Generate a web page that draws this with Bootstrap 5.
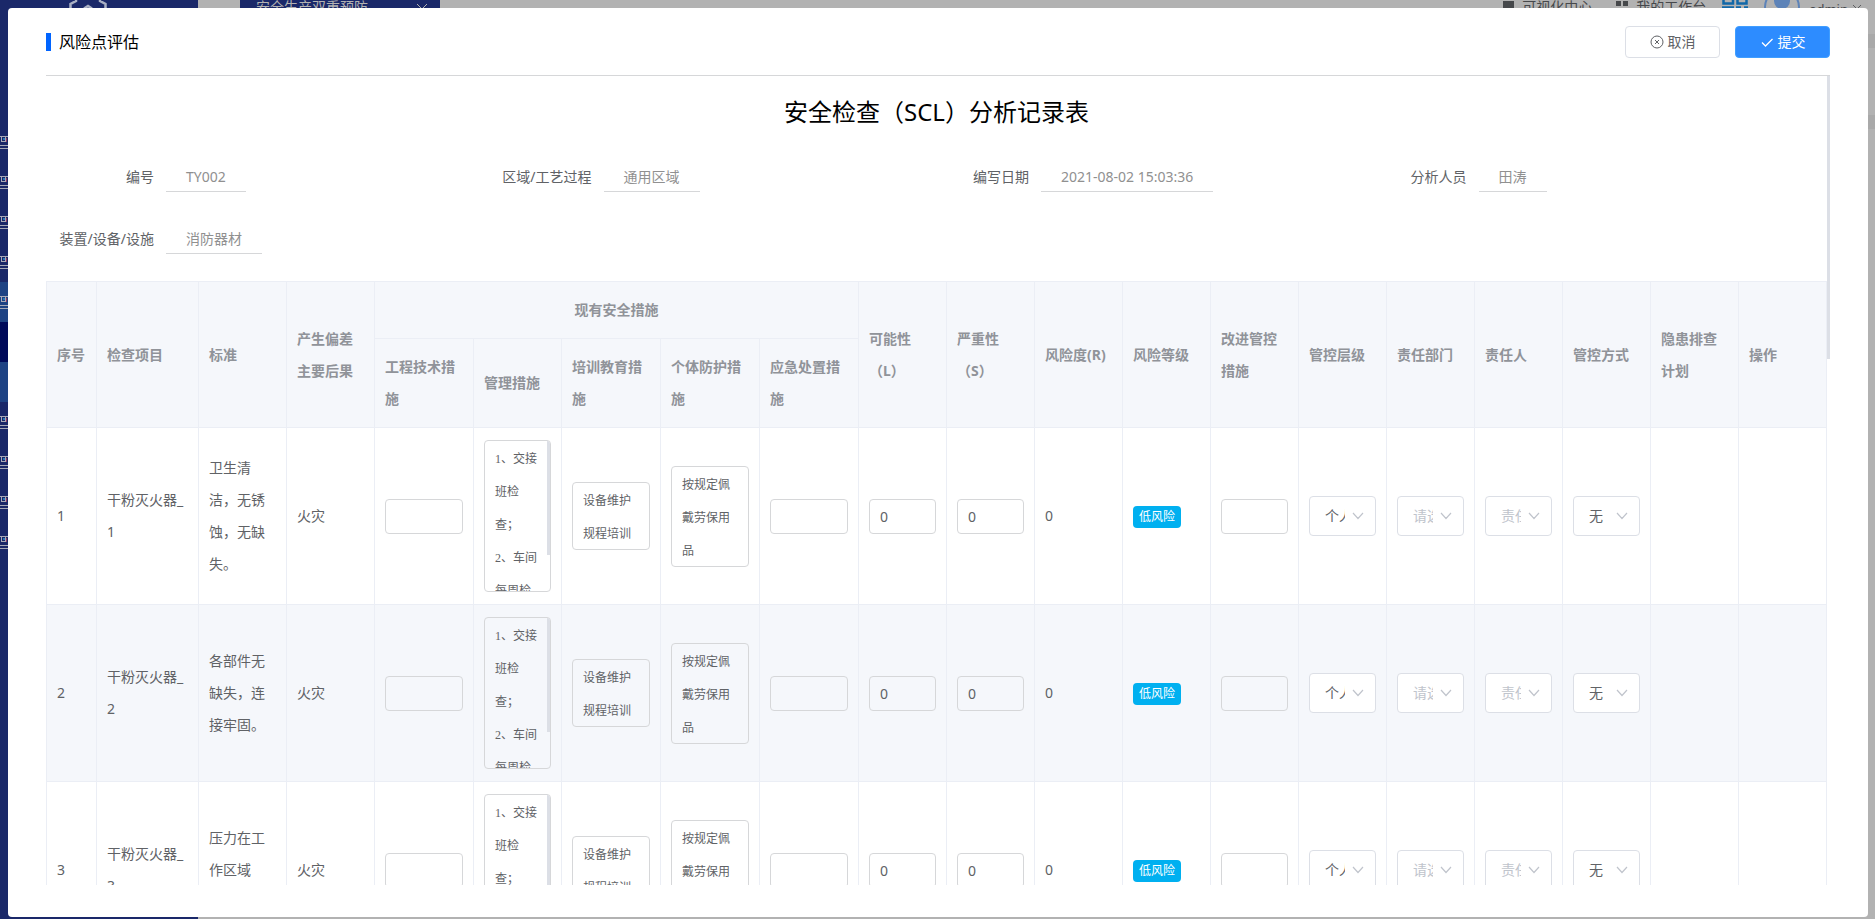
<!DOCTYPE html>
<html lang="zh-CN">
<head>
<meta charset="utf-8">
<meta name="viewport" content="width=device-width, initial-scale=1">
<title>风险点评估</title>
<link href="https://cdn.jsdelivr.net/npm/bootstrap@5.3.0/dist/css/bootstrap.min.css" rel="stylesheet">
<style>
  body { font-family: "Noto Sans", "Noto Sans CJK SC", sans-serif; font-size: 14px; color: #606266; background: #b2b2b2; }

  /* dimmed application behind the dialog */
  .app-side { width: 198px; background: #1a2869; padding-top: 122px; }
  .app-logo { top: 0; left: 69px; }
  .side-item { height: 40px; padding-top: 14px; line-height: 0; }
  .side-open { background: #1e4384; }
  .side-active { background: #000a5a; }
  .app-top { height: 14px; line-height: 14px; color: #46484b; padding-right: 13px; white-space: nowrap; }
  .app-tab { width: 200px; margin-left: 42px; padding: 0 12px 0 16px; background: #1a2869; color: #b2b2b2; }
  .user-name { padding-top: 2px; font-size: 13px; }
  .app-strip { height: 14px; margin-top: 20px; margin-bottom: 67px; background: #a9a9a9; }

  /* dialog */
  .dialog { inset: 8px 7px 2px 8px; border-radius: 4px; padding: 0 38px 32px; }
  .dialog-head { height: 68px; border-bottom: 1px solid #d6d7d9; }
  .dialog-title { font-size: 16px; line-height: 24px; color: #000; }
  .title-bar { width: 5px; height: 18px; background: #0064ff; }
  .tool-row { gap: 15px; }
  .btn-tool { width: 95px; height: 32px; font-size: 14px; line-height: 20px; border-radius: 4px; padding: 0; }
  .btn-cancel { color: #606266; border-color: #dcdfe6; background: #fff; }
  .btn-submit { color: #fff; border-color: #409eff; background: #2d8cff; }
  .dialog-scroll { overflow-y: auto; scrollbar-width: none; padding-right: 3px; }
  .dialog-scroll::-webkit-scrollbar { display: none; }
  .thumb { width: 3px; background: #dcdfe6; right: 0; top: 0; height: 35%; }

  .doc-title { font-size: 24px; line-height: 32px; color: #000; padding-top: 20px; margin-bottom: 33px; font-weight: 400; }
  .info-grid { display: grid; grid-template-columns: repeat(4, 1fr); row-gap: 31px; padding-right: 31px; margin: 0 0 27px; }
  .info-grid dt { width: 108px; padding-top: 2px; text-align: right; font-weight: 400; line-height: 28px; white-space: nowrap; }
  .info-grid dd { margin: 0 0 0 12px; padding: 2px 20px 0; line-height: 28px; color: #909090; border-bottom: 1px solid #d6d7d9; white-space: nowrap; }

  /* record table */
  .record { width: 100%; table-layout: fixed; border-collapse: separate; border-spacing: 0; border: solid #ebeef5; border-width: 1px 0 0 1px; line-height: 32px; }
  .record th, .record td { padding: 12px 10px; border: solid #ebeef5; border-width: 0 1px 1px 0; vertical-align: middle; word-break: break-all; }
  .record th { background: #f5f7fb; color: #909399; font-weight: 700; }
  .record tbody tr:nth-child(even) { background: #f5f7fb; }
  .c-no { width: 50px; } .c-item { width: 102px; } .c-s { width: 88px; } .c-m { width: 99px; }

  .box { display: block; width: 100%; height: 35px; padding: 0 10px; border: 1px solid #d6d7d9; border-radius: 4px; background: transparent; color: #606266; font-size: 14px; line-height: 33px; }
  textarea.box { resize: none; overflow: hidden; padding-top: 2px; font-family: "Liberation Serif", "Noto Sans CJK SC", serif; font-size: 12px; }
  textarea.lines-2 { height: 68px; }
  textarea.lines-3 { height: 101px; }
  textarea.box-scroll { height: 152px; padding-right: 13px; }
  .box-thumb { width: 3px; height: 75%; top: 1px; right: 1px; background: #dcdfe6; border-radius: 0 3px 0 0; }
  .pick { display: block; width: 100%; height: 40px; padding: 0 30px 0 15px; border: 1px solid #dcdfe6; border-radius: 4px; color: #606266; font-size: 14px; line-height: 38px; appearance: none; text-overflow: clip; overflow: hidden;
    background: #fff url("data:image/svg+xml,%3Csvg xmlns='http://www.w3.org/2000/svg' width='12' height='8' fill='none' stroke='%23c0c4cc' stroke-width='1.2'%3E%3Cpath d='M1 1l5 5.500l5-5.500'/%3E%3C/svg%3E") no-repeat right 11px center; }
  .pick-empty { color: #c0c4cc; }
  .risk { display: inline-block; height: 22px; line-height: 22px; padding: 0 6px; border-radius: 4px; font-size: 12px; color: #fff; background: #00b0f0; vertical-align: middle; }
</style>
</head>
<body class="vh-100 overflow-hidden">

<svg class="d-none">
  <symbol id="menu" viewBox="0 0 16 14"><path d="M0 .500h8M0 9.500h8M0 12.500h8" stroke="#a9abb8"/><path d="M1.500 1v5M5.500 1v5M1 5.500h5" stroke="#a9abb8" fill="none"/><path d="M3 2h2v2h-2z" fill="#2a78b8"/><path d="M6 2h1v4h-1z" fill="#8a3a62"/></symbol>
</svg>

<div class="d-flex vh-100" aria-hidden="true">
  <div class="app-side position-relative flex-shrink-0">
    <svg class="app-logo position-absolute" width="38" height="8" fill="none" stroke="#a9b0c4" stroke-width="2.500"><path d="M1.500 8V4L7 1V0M36.500 8V4L31 1V0"/><path d="M15 8.500l4-2.500l4 2.500"/></svg>
    <div class="side-item"><svg width="16" height="14"><use href="#menu"/></svg></div>
    <div class="side-item"><svg width="16" height="14"><use href="#menu"/></svg></div>
    <div class="side-item"><svg width="16" height="14"><use href="#menu"/></svg></div>
    <div class="side-item"><svg width="16" height="14"><use href="#menu"/></svg></div>
    <div class="side-item side-open"><svg width="16" height="14"><use href="#menu"/></svg></div>
    <div class="side-item side-active"></div>
    <div class="side-item side-open"></div>
    <div class="side-item"><svg width="16" height="14"><use href="#menu"/></svg></div>
    <div class="side-item"><svg width="16" height="14"><use href="#menu"/></svg></div>
    <div class="side-item"><svg width="16" height="14"><use href="#menu"/></svg></div>
    <div class="side-item"><svg width="16" height="14"><use href="#menu"/></svg></div>
  </div>
  <div class="flex-grow-1">
    <div class="app-top d-flex align-items-start">
      <div class="app-tab d-flex justify-content-between"><span>安全生产双重预防</span><svg width="12" height="14" fill="none" stroke="#b2b2b2"><path d="M1 4l5 5l5-5"/></svg></div>
      <svg class="ms-auto" width="11" height="14"><path d="M0 1h11v9h-11z" fill="#46484b"/></svg><span class="ps-1 ms-1">可视化中心</span>
      <svg class="ms-4" width="12" height="14" fill="#46484b"><path d="M0 1h5v5h-5zM7 1h5v5h-5zM0 8h5v5h-5zM7 8h5v5h-5z"/></svg><span class="ps-1 ms-1">我的工作台</span>
      <svg class="ms-3 me-3" width="26" height="14" fill="none" stroke="#1268a8" stroke-width="2.500"><path d="M1.500 -5v8.500h9.500v-8.500M15.500 -5v8.500h9v-8.500M0 7.500h12M14 7.500h5M22 7.500h4"/></svg>
      <svg class="me-2" width="37" height="14"><circle cx="18" cy="7" r="17" fill="none" stroke="#5d83b8" stroke-width="2"/><circle cx="18" cy="1" r="8" fill="#5d83b8"/></svg>
      <span class="user-name me-1">admin</span>
      <svg width="10" height="14" fill="none" stroke="#5c5e61"><path d="M1 5l4 4l4-4"/></svg>
    </div>
    <div class="app-strip"></div>
    <div class="app-strip"></div>
  </div>
</div>

<div class="dialog position-fixed bg-white d-flex flex-column" role="dialog" aria-labelledby="dlg-title">
  <div class="dialog-head d-flex align-items-center flex-shrink-0">
    <span class="title-bar"></span>
    <h1 class="dialog-title fw-normal mb-0 ms-2" id="dlg-title">风险点评估</h1>
    <div class="tool-row d-flex ms-auto">
      <button type="button" class="btn btn-tool btn-cancel d-flex align-items-center justify-content-center"><svg class="me-1" width="14" height="14" fill="none" stroke="#606266"><circle cx="7" cy="7" r="6"/><path d="M5 5l4 4M9 5l-4 4"/></svg>取消</button>
      <button type="button" class="btn btn-tool btn-submit d-flex align-items-center justify-content-center"><svg class="me-1" width="14" height="14" fill="none" stroke="#fff" stroke-width="1.300"><path d="M2 7.500l3.500 3.500l7-7"/></svg>提交</button>
    </div>
  </div>

  <div class="position-relative flex-grow-1 overflow-hidden d-flex">
    <div class="dialog-scroll w-100">
      <h2 class="doc-title text-center">安全检查（SCL）分析记录表</h2>
      <dl class="info-grid">
        <div class="d-flex"><dt>编号</dt><dd>TY002</dd></div>
        <div class="d-flex"><dt>区域/工艺过程</dt><dd>通用区域</dd></div>
        <div class="d-flex"><dt>编写日期</dt><dd>2021-08-02 15:03:36</dd></div>
        <div class="d-flex"><dt>分析人员</dt><dd>田涛</dd></div>
        <div class="d-flex"><dt>装置/设备/设施</dt><dd>消防器材</dd></div>
      </dl>

      <table class="record">
        <colgroup>
          <col class="c-no"><col class="c-item"><col class="c-s"><col class="c-s"><col class="c-m"><col class="c-s"><col class="c-m"><col class="c-m"><col class="c-m">
          <col class="c-s"><col class="c-s"><col class="c-s"><col class="c-s"><col class="c-s"><col class="c-s"><col class="c-s"><col class="c-s"><col class="c-s"><col class="c-s"><col class="c-s">
        </colgroup>
        <thead>
          <tr>
            <th rowspan="2">序号</th><th rowspan="2">检查项目</th><th rowspan="2">标准</th><th rowspan="2">产生偏差主要后果</th>
            <th colspan="5" class="text-center">现有安全措施</th>
            <th rowspan="2">可能性（L）</th><th rowspan="2">严重性（S）</th><th rowspan="2">风险度(R)</th><th rowspan="2">风险等级</th><th rowspan="2">改进管控措施</th>
            <th rowspan="2">管控层级</th><th rowspan="2">责任部门</th><th rowspan="2">责任人</th><th rowspan="2">管控方式</th><th rowspan="2">隐患排查计划</th><th rowspan="2">操作</th>
          </tr>
          <tr><th>工程技术措施</th><th>管理措施</th><th>培训教育措施</th><th>个体防护措施</th><th>应急处置措施</th></tr>
        </thead>
        <tbody>
          <tr>
            <td>1</td><td>干粉灭火器_1</td><td>卫生清洁，无锈蚀，无缺失。</td><td>火灾</td>
            <td><textarea class="box" aria-label="工程技术措施"></textarea></td>
            <td><div class="position-relative"><textarea class="box box-scroll" aria-label="管理措施">1、交接班检查；
2、车间每周检查</textarea><span class="box-thumb position-absolute"></span></div></td>
            <td><textarea class="box lines-2" aria-label="培训教育措施">设备维护规程培训</textarea></td>
            <td><textarea class="box lines-3" aria-label="个体防护措施">按规定佩戴劳保用品</textarea></td>
            <td><textarea class="box" aria-label="应急处置措施"></textarea></td>
            <td><input class="box" type="text" value="0" aria-label="可能性"></td>
            <td><input class="box" type="text" value="0" aria-label="严重性"></td>
            <td>0</td>
            <td><span class="risk">低风险</span></td>
            <td><textarea class="box" aria-label="改进管控措施"></textarea></td>
            <td><select class="pick" aria-label="管控层级"><option>个人</option></select></td>
            <td><select class="pick pick-empty" aria-label="责任部门"><option>请选择</option></select></td>
            <td><select class="pick pick-empty" aria-label="责任人"><option>责任人</option></select></td>
            <td><select class="pick" aria-label="管控方式"><option>无</option></select></td>
            <td></td><td></td>
          </tr>
          <tr>
            <td>2</td><td>干粉灭火器_2</td><td>各部件无缺失，连接牢固。</td><td>火灾</td>
            <td><textarea class="box" aria-label="工程技术措施"></textarea></td>
            <td><div class="position-relative"><textarea class="box box-scroll" aria-label="管理措施">1、交接班检查；
2、车间每周检查</textarea><span class="box-thumb position-absolute"></span></div></td>
            <td><textarea class="box lines-2" aria-label="培训教育措施">设备维护规程培训</textarea></td>
            <td><textarea class="box lines-3" aria-label="个体防护措施">按规定佩戴劳保用品</textarea></td>
            <td><textarea class="box" aria-label="应急处置措施"></textarea></td>
            <td><input class="box" type="text" value="0" aria-label="可能性"></td>
            <td><input class="box" type="text" value="0" aria-label="严重性"></td>
            <td>0</td>
            <td><span class="risk">低风险</span></td>
            <td><textarea class="box" aria-label="改进管控措施"></textarea></td>
            <td><select class="pick" aria-label="管控层级"><option>个人</option></select></td>
            <td><select class="pick pick-empty" aria-label="责任部门"><option>请选择</option></select></td>
            <td><select class="pick pick-empty" aria-label="责任人"><option>责任人</option></select></td>
            <td><select class="pick" aria-label="管控方式"><option>无</option></select></td>
            <td></td><td></td>
          </tr>
          <tr>
            <td>3</td><td>干粉灭火器_3</td><td>压力在工作区域内。</td><td>火灾</td>
            <td><textarea class="box" aria-label="工程技术措施"></textarea></td>
            <td><div class="position-relative"><textarea class="box box-scroll" aria-label="管理措施">1、交接班检查；
2、车间每周检查</textarea><span class="box-thumb position-absolute"></span></div></td>
            <td><textarea class="box lines-2" aria-label="培训教育措施">设备维护规程培训</textarea></td>
            <td><textarea class="box lines-3" aria-label="个体防护措施">按规定佩戴劳保用品</textarea></td>
            <td><textarea class="box" aria-label="应急处置措施"></textarea></td>
            <td><input class="box" type="text" value="0" aria-label="可能性"></td>
            <td><input class="box" type="text" value="0" aria-label="严重性"></td>
            <td>0</td>
            <td><span class="risk">低风险</span></td>
            <td><textarea class="box" aria-label="改进管控措施"></textarea></td>
            <td><select class="pick" aria-label="管控层级"><option>个人</option></select></td>
            <td><select class="pick pick-empty" aria-label="责任部门"><option>请选择</option></select></td>
            <td><select class="pick pick-empty" aria-label="责任人"><option>责任人</option></select></td>
            <td><select class="pick" aria-label="管控方式"><option>无</option></select></td>
            <td></td><td></td>
          </tr>
        </tbody>
      </table>
    </div>
    <span class="thumb position-absolute"></span>
  </div>
</div>

<script src="https://cdn.jsdelivr.net/npm/bootstrap@5.3.0/dist/js/bootstrap.bundle.min.js"></script>
</body>
</html>
